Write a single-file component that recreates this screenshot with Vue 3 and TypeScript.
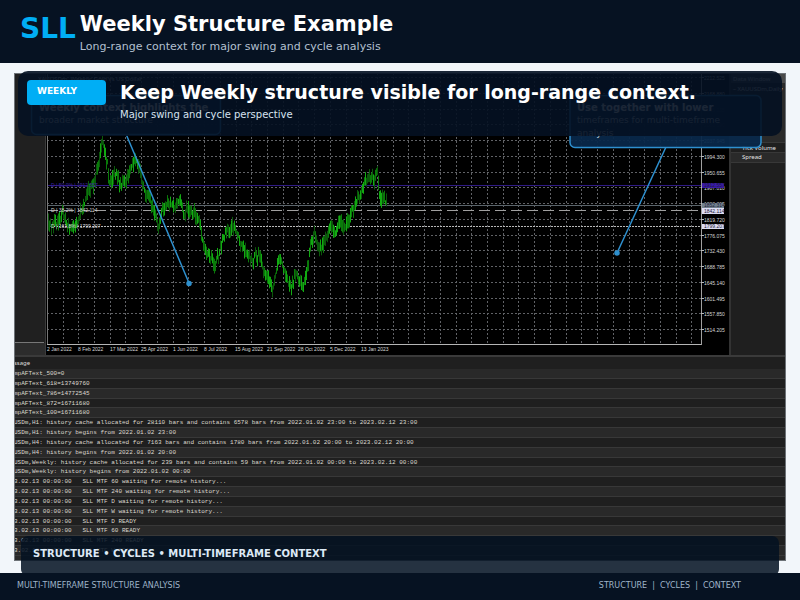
<script setup lang="ts">
interface LogLine {
  text: string
}

const CHART_LEFT = 33
const CHART_RIGHT = 687
const CHART_BOTTOM = 272

const anchors: [number, number][] = [
  [47, 218], [51, 228], [55, 222], [59, 221], [63, 211], [66, 222], [70, 228], [75, 225], [78, 221], [80, 213],
  [84, 205], [87, 193], [90, 188], [93, 185], [96, 175], [99, 162], [101, 146], [102, 137], [104, 152], [107, 163],
  [109, 182], [112, 181], [116, 170], [119, 183], [124, 182], [128, 176], [132, 165], [136, 160], [140, 172],
  [142, 185], [146, 193], [150, 202], [154, 212], [158, 226], [161, 212], [165, 206], [170, 205], [175, 206],
  [181, 200], [183, 216], [186, 209], [190, 211], [195, 214], [199, 222], [202, 240], [205, 249], [209, 256],
  [214, 265], [218, 256], [222, 241], [226, 232], [232, 226], [236, 231], [240, 243], [244, 250], [248, 253],
  [252, 262], [256, 255], [260, 258], [263, 270], [268, 278], [272, 290], [275, 275], [278, 257], [282, 266],
  [286, 277], [291, 288], [296, 273], [300, 284], [303, 287], [306, 272], [308, 262], [311, 243], [314, 233],
  [319, 248], [323, 243], [327, 235], [330, 225], [335, 232], [339, 222], [344, 229], [350, 217], [355, 202],
  [360, 196], [364, 182], [370, 176], [374, 178], [377, 168], [379, 197], [384, 197], [387, 206],
]

function priceAt(x: number): number {
  for (let i = 1; i < anchors.length; i++) {
    const [x0, y0] = anchors[i - 1]
    const [x1, y1] = anchors[i]
    if (x <= x1) return y0 + ((y1 - y0) * (x - x0)) / (x1 - x0)
  }
  return anchors[anchors.length - 1][1]
}

let seed = 41
function rand(): number {
  seed = (seed * 16807) % 2147483647
  return seed / 2147483647
}

const shades = ['', '', '']
for (let x = 47; x <= 386; x++) {
  const mid = priceAt(x) - 73 + (rand() - 0.5) * 5
  const up = 2 + rand() * 7
  const down = 2 + rand() * 7
  const px = x - 13.5
  shades[Math.floor(rand() * 3)] += `M${px} ${(mid - up).toFixed(1)}V${(mid + down).toFixed(1)}`
}
const shadeColors = ['#0a7a0a', '#12aa12', '#0b580b']

const columns = Array.from({ length: 41 }, (_, i) => Math.round(48.6 + i * 15.72) + 0.5)
const rows = Array.from({ length: 17 }, (_, i) => Math.round(4.2 + i * 15.74) + 0.5)

const prices = [
  '2212.525', '2168.880', '2125.235', '2081.590', '2037.945', '1994.300', '1950.655', '1907.010', '1863.365',
  '1819.720', '1776.075', '1732.430', '1688.785', '1645.140', '1601.495', '1557.850', '1514.205',
]

const dates = [
  '2 Jan 2022', '8 Feb 2022', '17 Mar 2022', '25 Apr 2022', '1 Jun 2022', '8 Jul 2022', '15 Aug 2022',
  '21 Sep 2022', '28 Oct 2022', '5 Dec 2022', '13 Jan 2023',
]

const log: LogLine[] = [
  'mpAFText_500=0',
  'mpAFText_618=13749760',
  'mpAFText_786=14772545',
  'mpAFText_872=16711680',
  'mpAFText_100=16711680',
  'USDm,H1: history cache allocated for 28110 bars and contains 6578 bars from 2022.01.02 23:00 to 2023.02.12 23:00',
  'USDm,H1: history begins from 2022.01.02 23:00',
  'USDm,H4: history cache allocated for 7163 bars and contains 1780 bars from 2022.01.02 20:00 to 2023.02.12 20:00',
  'USDm,H4: history begins from 2022.01.02 20:00',
  'USDm,Weekly: history cache allocated for 239 bars and contains 59 bars from 2022.01.02 00:00 to 2023.02.12 00:00',
  'USDm,Weekly: history begins from 2022.01.02 00:00',
  '3.02.13 00:00:00   SLL MTF 60 waiting for remote history...',
  '3.02.13 00:00:00   SLL MTF 240 waiting for remote history...',
  '3.02.13 00:00:00   SLL MTF D waiting for remote history...',
  '3.02.13 00:00:00   SLL MTF W waiting for remote history...',
  '3.02.13 00:00:00   SLL MTF D READY',
  '3.02.13 00:00:00   SLL MTF 60 READY',
  '3.02.13 00:00:00   SLL MTF 240 READY',
  '3.02.13 00:00:00   SLL MTF W READY',
].map((text) => ({ text }))
</script>

<template>
  <div class="page">
    <header class="top">
      <div class="logo">SLL</div>
      <div>
        <h1>Weekly Structure Example</h1>
        <p>Long-range context for major swing and cycle analysis</p>
      </div>
    </header>

    <main class="stage">
      <section class="terminal">
        <svg class="chart" viewBox="0 0 772 282" role="img" aria-label="Weekly price chart">
          <rect width="772" height="282" fill="#000" />
          <rect width="32" height="282" fill="#202020" />
          <rect y="270" width="32" height="12" fill="#2c2c2c" />
          <path d="M0 269.5H30" stroke="#777" />
          <path d="M31.5 0V282" stroke="#3c3c3c" />
          <rect x="715" width="57" height="282" fill="#1f1f1f" />
          <path d="M716 0V282" stroke="#333" stroke-width="2" />
          <rect x="717" width="55" height="10" fill="#4a4a4a" />
          <rect x="717" y="10" width="55" height="50" fill="#2a2a2a" />
          <rect x="717" y="60" width="55" height="10" fill="#2a2a2a" />
          <rect x="717" y="79" width="55" height="10" fill="#2a2a2a" />
          <path d="M717 69.5H772M717 79.5H772M717 89.5H772" stroke="#383838" />

          <g stroke="#606266" stroke-dasharray="2 2">
            <path v-for="x in columns" :key="`c${x}`" :d="`M${x} 0V${CHART_BOTTOM}`" />
            <path v-for="y in rows" :key="`r${y}`" :d="`M${CHART_LEFT} ${y}H${CHART_RIGHT}`" />
          </g>

          <path d="M33 112.5H688" stroke="#2f1a85" />
          <path d="M33 132.5H688" stroke="#5a646b" />
          <path d="M33 137.5H688" stroke="#a0a0a0" stroke-dasharray="11 5" />
          <path d="M33 153.5H688" stroke="#b8b8b8" stroke-dasharray="2 1" />

          <path v-for="(d, i) in shades" :key="i" :d="d" :stroke="shadeColors[i]" fill="none" />

          <path d="M33.5 0V272" stroke="#777" />
          <path d="M33 271.5H688" stroke="#b5b5b5" />
          <path d="M687.5 0V272" stroke="#a0a0a0" />

          <g class="tick">
            <text v-for="(p, i) in prices" :key="p" x="690" :y="rows[i] + 2">{{ p }}</text>
            <text v-for="(d, i) in dates" :key="d" :x="33 + Math.round(i * 31.4)" y="278">{{ d }}</text>
          </g>
          <path v-for="y in rows" :key="`t${y}`" :d="`M687 ${y}H690`" stroke="#bbb" />

          <rect x="688" y="110" width="22" height="5" fill="#3a1aa8" />
          <rect x="688" y="130" width="22" height="5" fill="#71818d" />
          <rect x="688" y="135" width="22" height="6" fill="#dcdcf2" />
          <rect x="688" y="151" width="22" height="5" fill="#dcdcf2" />
          <g class="tick dark">
            <text x="690" y="114">1912.557</text>
            <text x="690" y="134">1852.314</text>
            <text x="690" y="140">1842.114</text>
            <text x="690" y="155">1799.207</text>
          </g>
          <g class="tick">
            <text x="37" y="114" class="violet">D | 50.0% | 1912.557</text>
            <text x="37" y="139">D | 38.2% | 1842.114</text>
            <text x="37" y="155">D | 161.8% | 1799.207</text>
          </g>
          <g class="label">
            <text x="24" y="8">XAUUSDm, Weekly: Gold vs US Dollar</text>
            <text x="719" y="8">Data Window</text>
            <text x="719" y="18">– XAUUSDm,Daily</text>
            <text x="728" y="77">Tick Volume</text>
            <text x="728" y="86">Spread</text>
          </g>

          <g class="pointer">
            <path d="M112 61L175 210M652 74L603 180" />
            <circle cx="175" cy="210.5" r="2" />
            <circle cx="603" cy="180" r="2" />
          </g>
          <g class="callout">
            <rect x="17.5" y="22.5" width="189" height="39" rx="5" />
            <text x="25" y="38" class="strong">Weekly context highlights the</text>
            <text x="25" y="50">broader market structure</text>
            <rect x="556" y="22.5" width="191" height="52" rx="5" />
            <text x="563" y="38" class="strong">Use together with lower</text>
            <text x="563" y="50">timeframes for multi-timeframe</text>
            <text x="563" y="63">analysis</text>
          </g>
        </svg>

        <div class="log">
          <h3>ssage</h3>
          <ol>
            <li v-for="line in log" :key="line.text">{{ line.text }}</li>
          </ol>
        </div>
      </section>

      <section class="banner">
        <span class="badge">WEEKLY</span>
        <div>
          <h2>Keep Weekly structure visible for long-range context.</h2>
          <p>Major swing and cycle perspective</p>
        </div>
      </section>
      <div class="caption">STRUCTURE • CYCLES • MULTI-TIMEFRAME CONTEXT</div>
    </main>

    <footer class="bottom">
      <span>MULTI-TIMEFRAME STRUCTURE ANALYSIS</span>
      <span>STRUCTURE&nbsp; |&nbsp; CYCLES&nbsp; |&nbsp; CONTEXT</span>
    </footer>
  </div>
</template>

<style>
body {
  margin: 0;
  background: #f2f6fa;
}
</style>

<style scoped>
.page {
  display: flex;
  flex-direction: column;
  min-height: 100vh;
  font-family: "DejaVu Sans", sans-serif;
  color: #fff;
}
h1, h2, h3, p, ol {
  margin: 0;
  padding: 0;
}
.top {
  display: flex;
  flex-shrink: 0;
  gap: 4px;
  box-sizing: border-box;
  height: 63px;
  padding: 9px 20px 0;
  background: #061222;
}
.logo {
  font-size: 28px;
  line-height: 40px;
  font-weight: 700;
  color: #00aef5;
}
h1 {
  font-size: 21px;
  line-height: 30px;
}
.top p {
  font-size: 11px;
  line-height: 16px;
  color: #b3c0d0;
}
.stage {
  position: relative;
  display: flex;
  flex: 1;
  overflow: hidden;
  padding: 10px 14px 12px;
  background: #f2f6fa;
}
.terminal {
  display: flex;
  flex: 1;
  flex-direction: column;
  min-width: 0;
  outline: 1px solid #6d7277;
  outline-offset: -1px;
}
.chart {
  display: block;
  width: 100%;
}
.tick {
  font: 5px "Liberation Sans", sans-serif;
  fill: #d6d6d6;
}
.dark {
  fill: #1c1c38;
}
.violet {
  fill: #3c24a0;
}
.label {
  font: 6px "Noto Sans", sans-serif;
  fill: #e4e4e4;
}
.pointer {
  fill: #2e90cf;
  stroke: #2e90cf;
  stroke-width: 1.5;
}
.callout {
  font-size: 9px;
  fill: #c5d0da;
}
.callout .strong {
  font-size: 10px;
  font-weight: 700;
  fill: #fff;
}
.callout rect {
  fill: #08284a;
  fill-opacity: 0.95;
  stroke: #2e90cf;
  stroke-width: 1.5;
}
.log {
  display: flex;
  flex: 1;
  flex-direction: column;
  overflow: hidden;
  padding-bottom: 5px;
  border-top: 2px solid #3a3a3a;
  background: #292929;
}
.log h3 {
  font: 6px/12px "Noto Sans", sans-serif;
  color: #ddd;
  background: #1f1f1f;
}
.log ol {
  display: grid;
  flex: 1;
  grid-auto-rows: 1fr;
  list-style: none;
}
.log li {
  overflow: hidden;
  padding-top: 1px;
  font: 6px/8px "Liberation Mono", monospace;
  color: #dcd8cf;
  white-space: pre;
  background: #1f1f1f;
  box-shadow: inset 0 -1px #383838;
}
.log li:nth-child(odd) {
  background: #292929;
}
.banner {
  position: absolute;
  top: 8px;
  right: 18px;
  left: 18px;
  display: flex;
  align-items: flex-start;
  gap: 14px;
  box-sizing: border-box;
  height: 65px;
  padding: 9px;
  border-radius: 10px;
  background: rgba(4, 17, 34, 0.91);
}
.badge {
  box-sizing: border-box;
  width: 79px;
  height: 25px;
  padding-left: 10px;
  border-radius: 4px;
  font-size: 9px;
  line-height: 22px;
  font-weight: 700;
  background: #00aef5;
}
h2 {
  font-size: 19px;
  line-height: 24px;
}
.banner p {
  font-size: 10px;
  line-height: 22px;
  color: #d7e3f0;
}
.caption {
  position: absolute;
  right: 21px;
  bottom: -3px;
  left: 21px;
  box-sizing: border-box;
  height: 40px;
  padding-left: 12px;
  border-radius: 7px;
  font-size: 10px;
  line-height: 35px;
  font-weight: 700;
  color: #dde9f5;
  background: rgba(4, 17, 34, 0.86);
}
.bottom {
  display: flex;
  flex-shrink: 0;
  justify-content: space-between;
  box-sizing: border-box;
  height: 27px;
  padding: 0 59px 0 17px;
  font-size: 8px;
  line-height: 26px;
  color: #9fb4c8;
  background: #061222;
}
</style>
